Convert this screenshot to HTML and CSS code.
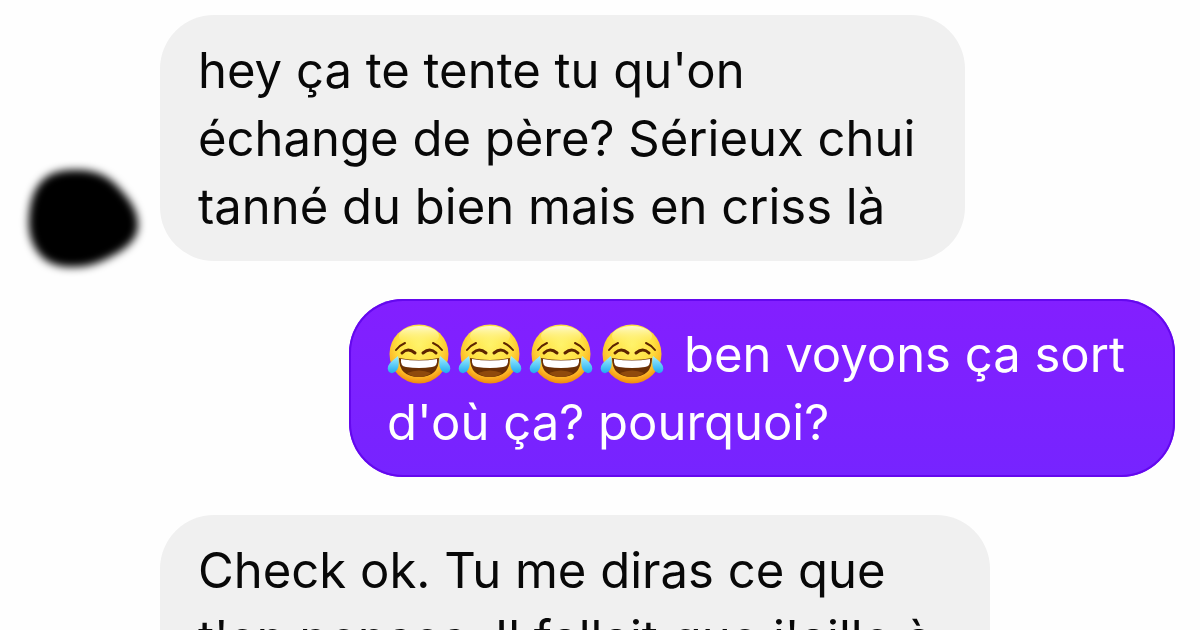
FILE: index.html
```html
<!DOCTYPE html>
<html lang="fr">
<head>
  <meta charset="UTF-8">
  <meta name="viewport" content="width=device-width, initial-scale=1.0">
  <title>Messages</title>
  <link rel="stylesheet" href="styles.css">
</head>
<body>

  <!-- Emoji réutilisé dans les messages -->
  <svg class="sprite" aria-hidden="true">
    <defs>
      <radialGradient id="face" cx="50%" cy="34%" r="66%">
        <stop offset="0" stop-color="#fff36a"/>
        <stop offset="0.55" stop-color="#ffe040"/>
        <stop offset="0.82" stop-color="#fdb827"/>
        <stop offset="1" stop-color="#f08a0c"/>
      </radialGradient>
      <linearGradient id="shine" x1="0" y1="0" x2="0" y2="1">
        <stop offset="0" stop-color="#fffbd0"/>
        <stop offset="1" stop-color="#fff36a" stop-opacity="0"/>
      </linearGradient>
      <linearGradient id="tear" x1="0" y1="0" x2="0" y2="1">
        <stop offset="0" stop-color="#a4f0ff"/>
        <stop offset="1" stop-color="#1eaaf0"/>
      </linearGradient>
      <symbol id="joy" viewBox="0 0 64 62">
        <circle cx="32" cy="31" r="29.5" fill="url(#face)"/>
        <ellipse cx="32" cy="13" rx="20" ry="10" fill="url(#shine)"/>
        <g fill="none" stroke="#5c2400" stroke-linecap="round">
          <path d="M9 27q4-5 9-7M55 27q-4-5-9-7" stroke-width="2"/>
          <path d="M15 30q6-6 13 0M36 30q7-6 13 0" stroke-width="3"/>
        </g>
        <path d="M12 35q20 4 40 0q0 19-20 19T12 35z" fill="#6b3005"/>
        <path d="M14 36q18 3 36 0q1 7-5 8q-13 2-26 0q-6-1-5-8z" fill="#fff"/>
        <path d="M20 50q12-5 24 0q-5 4-12 4t-12-4z" fill="#8f4a0c"/>
        <path d="M11 33q2 9-1 14q-4 5-8 2q-3-4 1-9q3-3 8-7z" fill="url(#tear)"/>
        <path d="M53 33q-2 9 1 14q4 5 8 2q3-4-1-9q-3-3-8-7z" fill="url(#tear)"/>
      </symbol>
    </defs>
  </svg>

  <main class="chat">
    <!-- Message reçu -->
    <div class="row">
      <div class="avatar-col">
        <svg class="avatar" viewBox="0 0 160 130" role="img" aria-label="Photo de profil">
          <path d="M75 29C96 28 110 36 120 48C130 59 138 70 138 84C138 98 126 108 112 115C98 123 86 126 72 126C54 126 44 120 37 110C31 101 28 90 29 76C30 58 35 46 44 38C52 31 62 29 75 29z"/>
        </svg>
      </div>
      <p class="bubble received">hey ça te tente tu qu'on<br>échange de père? Sérieux chui<br>tanné du bien mais en criss là</p>
    </div>

    <!-- Message envoyé -->
    <div class="row row-sent">
      <p class="bubble sent"><span class="emojis" role="img" aria-label="Quatre visages qui pleurent de rire"><svg class="emoji"><use href="#joy"/></svg><svg class="emoji"><use href="#joy"/></svg><svg class="emoji"><use href="#joy"/></svg><svg class="emoji"><use href="#joy"/></svg></span> ben voyons ça sort<br>d'où ça? pourquoi?</p>
    </div>

    <!-- Message reçu -->
    <div class="row">
      <div class="avatar-col"></div>
      <p class="bubble received long">Check ok. Tu me diras ce que<br>t'en penses. Il fallait que j'aille à</p>
    </div>
  </main>

</body>
</html>
```
FILE: styles.css
```css
* {
  box-sizing: border-box;
}

body {
  margin: 0;
  height: 100vh;
  overflow: hidden;
  background-color: #fefefe;
  color: #080808;
  font-family: Inter, "Liberation Sans", sans-serif;
  font-size: 49px;
  line-height: 68px;
}

.sprite {
  position: absolute;
  width: 0;
  height: 0;
}

.chat {
  display: flex;
  flex-direction: column;
  gap: 38px;
  padding: 15px 25px 0 0;
}

.row {
  display: flex;
  align-items: flex-end;
}

.row-sent {
  justify-content: flex-end;
}

.avatar-col {
  flex: 0 0 160px;
}

.avatar {
  display: block;
  width: 160px;
  height: 130px;
  margin-bottom: -10px;
  filter: blur(4px);
}

.bubble {
  margin: 0;
  padding: 22px 50px 20px 38px;
  border-radius: 54px;
  white-space: nowrap;
}

.received {
  background-color: #f0f0f0;
}

.long {
  min-width: 830px;
}

.sent {
  background: linear-gradient(#831fff, #7624ff);
  box-shadow: inset 0 0 0 2px #6408ee;
  color: #fff;
}

.emojis {
  display: inline-flex;
  gap: 7px;
  height: 50px;
  margin-right: 6px;
  align-items: center;
  vertical-align: -13px;
}

.emoji {
  flex: none;
  width: 64px;
  height: 62px;
}
```
